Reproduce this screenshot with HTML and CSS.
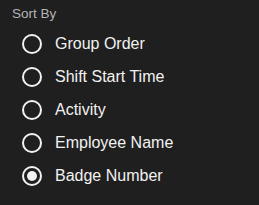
FILE: index.html
```html
<!DOCTYPE html>
<html lang="en">
<head>
    <meta charset="UTF-8">
    <title>Sort By</title>
    <link rel="stylesheet" href="styles.css">
</head>
<body>
    <section class="sort-panel">
        <div class="sort-title">Sort By</div>
        <label class="option"><span class="radio"></span>Group Order</label>
        <label class="option"><span class="radio"></span>Shift Start Time</label>
        <label class="option"><span class="radio"></span>Activity</label>
        <label class="option"><span class="radio"></span>Employee Name</label>
        <label class="option"><span class="radio checked"></span>Badge Number</label>
    </section>
</body>
</html>
```
FILE: styles.css
```css
body{
    margin: 0;
    background-color: #1f1f1f;
    font-family: "Liberation Sans", Arial, sans-serif;
}

.sort-panel{
    padding: 6px 0 0 12px;
}

.sort-title{
    color: #b4b4b4;
    font-size: 13.5px;
    line-height: 16px;
    margin-bottom: 5px;
}

.option{
    display: flex;
    align-items: center;
    gap: 13px;
    height: 33px;
    padding-left: 10px;
    color: #f2f2f2;
    font-size: 16px;
    cursor: pointer;
}

.radio{
    width: 16px;
    height: 16px;
    border: 2px solid #f2f2f2;
    border-radius: 50%;
    display: flex;
    align-items: center;
    justify-content: center;
}

.radio.checked::after{
    content: "";
    width: 10px;
    height: 10px;
    border-radius: 50%;
    background-color: #f2f2f2;
}
```
